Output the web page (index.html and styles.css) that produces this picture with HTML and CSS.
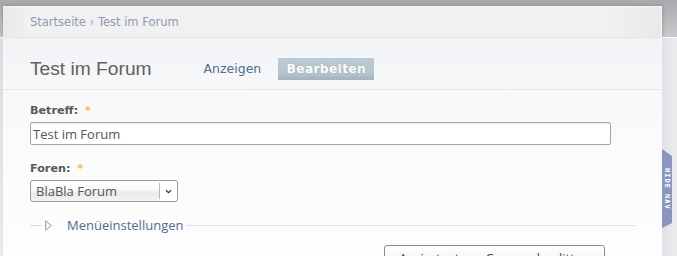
FILE: index.html
```html
<!DOCTYPE html>
<html lang="de">
<head>
<meta charset="utf-8">
<title>Test im Forum</title>
<link rel="stylesheet" href="styles.css">
</head>
<body>
<div class="top">
  <div class="crumbs"><a href="#">Startseite</a> <span class="sep">›</span> <a href="#">Test im Forum</a></div>
</div>
<div class="page">
  <div class="gutter-left"></div>
  <main class="panel">
    <header class="head">
      <h1 class="title">Test im Forum</h1>
      <nav class="tabs">
        <a class="tab" href="#">Anzeigen</a>
        <a class="tab active" href="#">Bearbeiten</a>
      </nav>
    </header>
    <form class="form">
      <label class="label">Betreff: <span class="req">*</span></label>
      <input class="input" type="text" value="Test im Forum">
      <label class="label label-foren">Foren: <span class="req">*</span></label>
      <div class="select">
        <span class="select-text">BlaBla Forum</span>
        <span class="select-arrow"><svg width="7" height="5" viewBox="0 0 7 5"><path d="M1 1.2 L3.5 3.6 L6 1.2" fill="none" stroke="#333" stroke-width="1.2"/></svg></span>
      </div>
      <div class="collapse">
        <span class="line-short"></span>
        <svg class="tri" width="7" height="11" viewBox="0 0 7 11"><path d="M0.7 0.8 L6.2 5.5 L0.7 10.2 Z" fill="none" stroke="#9a9a9a" stroke-width="1"/></svg>
        <a class="collapse-link" href="#">Menüeinstellungen</a>
        <span class="line-long"></span>
      </div>
      <div class="actions">
        <button class="btn" type="button">Anrisstext am Cursor absplitten</button>
      </div>
    </form>
  </main>
  <aside class="gutter-right">
    <a class="hidenav" href="#">HIDE NAV</a>
  </aside>
</div>
</body>
</html>
```
FILE: styles.css
```css
html, body {
  margin: 0;
  padding: 0;
  height: 256px;
  overflow: hidden;
}
body {
  font-family: "DejaVu Sans", Verdana, sans-serif;
  background: #e6e6e9;
}
a { text-decoration: none; }

.top {
  height: 38px;
  box-sizing: border-box;
  padding: 6px 15px 0 3px;
  background: linear-gradient(#a9a9ad, #bdbdc1 60%, #c9c9cd);
  border-bottom: 1px solid #ffffff;
}
.crumbs {
  height: 31px;
  box-sizing: border-box;
  padding-left: 27px;
  line-height: 30px;
  font-size: 11.5px;
  color: #8d9bb2;
  background: linear-gradient(to right, #e9e9e9, #f1f1f1 4%, #f1f1f1 92%, #e9e9e9);
  box-shadow: 0 0 4px rgba(0,0,0,0.28);
  border-top: 1px solid #f8f8f8;
  border-right: 1px solid #fafafa;
}
.crumbs a { color: #8d9bb2; }
.sep { color: #9aa6b8; }

.page {
  display: flex;
  height: 218px;
  overflow: hidden;
}
.gutter-left {
  width: 3px;
  background: linear-gradient(#dcdcde, #e9e9eb);
}
.panel {
  width: 659px;
  box-sizing: border-box;
  padding: 0 0 0 27px;
  background: linear-gradient(#f2f3f6, #f7f8f9 50px, #fbfbfc 110px, #fdfdfd);
}
.gutter-right {
  width: 15px;
  padding-top: 111px;
  box-sizing: border-box;
  background: linear-gradient(to right, #e1e2e6, #ebebee);
}

.head {
  height: 52px;
  box-sizing: border-box;
  margin-left: -27px;
  padding: 0 0 9px 27px;
  border-bottom: 1px solid #e6e7e9;
  display: flex;
  align-items: flex-end;
}
.title {
  margin: 0;
  font-family: "Liberation Sans", Arial, sans-serif;
  font-weight: normal;
  font-size: 19.2px;
  line-height: 22px;
  color: #606060;
}
.tabs {
  display: flex;
  gap: 6px;
  margin-left: 41px;
}
.tab {
  display: block;
  height: 22px;
  line-height: 22px;
  padding: 0 11px;
  font-size: 12.5px;
  color: #4f6d93;
}
.tab.active {
  width: 96px;
  box-sizing: border-box;
  text-align: center;
  padding: 0;
  font-size: 12.3px;
  font-weight: bold;
  color: #ffffff;
  letter-spacing: 0.3px;
  background: linear-gradient(#bccbd5, #b4c4ce 70%, #a3b2bd);
  text-shadow: 0 0 1px rgba(90,110,130,0.5);
}

.form {
  display: flex;
  flex-direction: column;
  align-items: flex-start;
  padding-top: 13px;
}
.label {
  font-size: 11.2px;
  line-height: 16px;
  font-weight: bold;
  color: #585858;
  margin-bottom: 3px;
}
.req {
  color: #f6b93b;
  margin-left: 3px;
}
.label-foren { margin-top: 16px; }
.input {
  width: 581px;
  height: 23px;
  box-sizing: border-box;
  margin: 0;
  padding: 0 2px;
  border: 1px solid #a4a4a4;
  border-radius: 2px;
  background: #fff;
  font-family: "Open Sans", sans-serif;
  font-size: 13px;
  color: #555;
  box-shadow: inset 0 1px 1px rgba(0,0,0,0.08);
}
.select {
  width: 148px;
  height: 22px;
  box-sizing: border-box;
  display: flex;
  border: 1px solid #9b9b9b;
  border-radius: 3px;
  background: linear-gradient(#ffffff, #f9f9f9 45%, #e9e9e9 60%, #f3f3f3);
}
.select-text {
  flex: 1;
  padding-left: 5px;
  font-family: "Open Sans", sans-serif;
  font-size: 13px;
  color: #555;
  border-right: 1px solid #b8b8b8;
  margin: 2px 0;
  line-height: 16px;
}
.select-arrow {
  width: 17px;
  display: flex;
  align-items: center;
  justify-content: center;
  background: #fff;
  border-radius: 0 3px 3px 0;
}

.collapse {
  display: flex;
  align-items: center;
  width: 606px;
  height: 22px;
  margin-top: 12px;
}
.line-short {
  width: 12px;
  border-top: 1px solid #dcdcdc;
}
.tri { margin-left: 3px; }
.collapse-link {
  margin-left: 15px;
  font-family: "Open Sans", sans-serif;
  font-size: 13px;
  color: #4f6d93;
}
.line-long {
  flex: 1;
  margin-left: 3px;
  border-top: 1px solid #e0e0e0;
}
.actions {
  width: 575px;
  display: flex;
  justify-content: flex-end;
  margin-top: 9px;
}
.btn {
  width: 221px;
  height: 26px;
  box-sizing: border-box;
  padding: 0;
  border: 1px solid #8c8c8c;
  border-radius: 3px;
  background: linear-gradient(#ffffff, #ececec);
  font-family: "Open Sans", sans-serif;
  font-size: 13px;
  color: #444;
}

.hidenav {
  display: flex;
  align-items: center;
  justify-content: center;
  width: 10px;
  height: 79px;
  background: #8996c0;
  clip-path: polygon(0 0, 100% 7px, 100% calc(100% - 5px), 0 100%);
  writing-mode: vertical-rl;
  font-family: "DejaVu Sans Mono", monospace;
  font-weight: bold;
  font-size: 7px;
  letter-spacing: 1px;
  color: #ffffff;
}
```
